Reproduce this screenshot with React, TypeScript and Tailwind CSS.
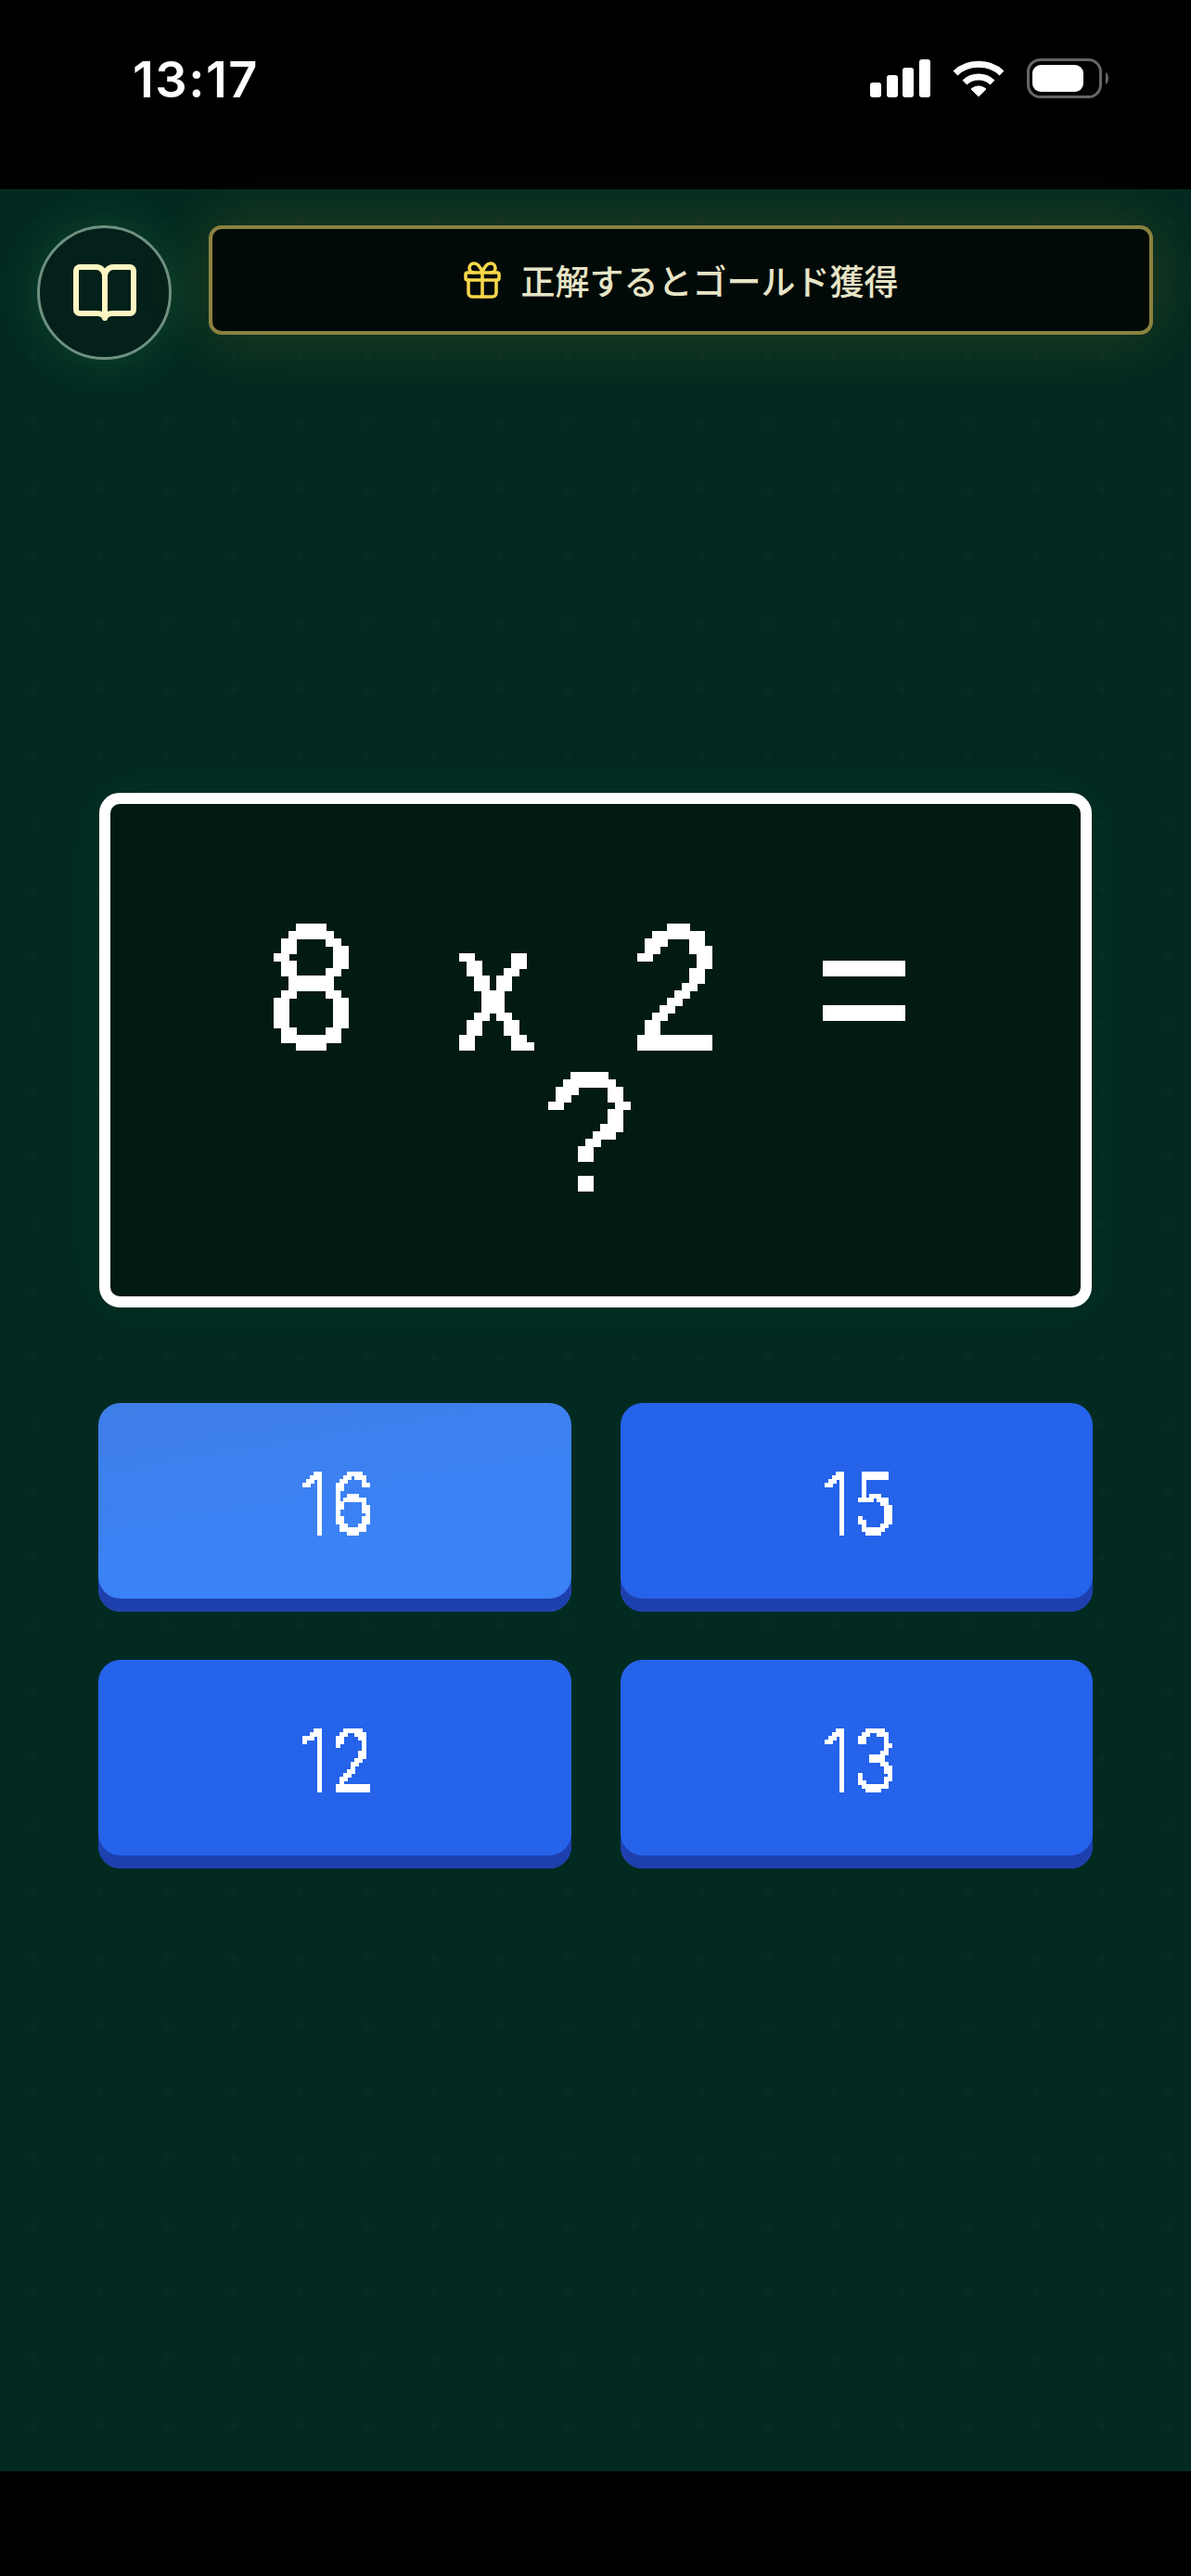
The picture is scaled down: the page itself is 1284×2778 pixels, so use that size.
function PixelFilters() {
  return (
    <svg width="0" height="0" className="absolute">
      <defs>
        <filter id="px8" x="0" y="0" width="100%" height="100%" colorInterpolationFilters="sRGB">
          <feFlood x="4" y="4" width="1" height="1" />
          <feComposite width="8" height="8" />
          <feTile result="grid" />
          <feComposite in="SourceGraphic" in2="grid" operator="in" />
          <feMorphology operator="dilate" radius="4" />
          <feComponentTransfer>
            <feFuncA type="discrete" tableValues="0 1 1 1" />
          </feComponentTransfer>
        </filter>
        <filter id="px4" x="0" y="0" width="100%" height="100%" colorInterpolationFilters="sRGB">
          <feFlood x="2" y="2" width="1" height="1" />
          <feComposite width="4" height="4" />
          <feTile result="grid" />
          <feComposite in="SourceGraphic" in2="grid" operator="in" />
          <feMorphology operator="dilate" radius="2" />
          <feComponentTransfer>
            <feFuncA type="discrete" tableValues="0 1 1 1" />
          </feComponentTransfer>
        </filter>
      </defs>
    </svg>
  );
}

function StatusIcons() {
  return (
    <div className="flex items-center gap-[24px]">
      <svg width="65" height="41" viewBox="0 0 65 41" fill="#fff">
        <rect x="0" y="25" width="12" height="16" rx="3" />
        <rect x="18" y="17" width="12" height="24" rx="3" />
        <rect x="35" y="9" width="12" height="32" rx="3" />
        <rect x="53" y="0" width="12" height="41" rx="3" />
      </svg>
      <svg width="56" height="40" viewBox="0 0 56 40" fill="none" stroke="#fff" strokeWidth="7">
        <path d="M3 14 C16 1 40 1 53 14" />
        <path d="M13 24 C21 16 35 16 43 24" />
        <path d="M20 31 L28 39 L36 31 C31 27 25 27 20 31 Z" fill="#fff" strokeWidth="1" />
      </svg>
      <svg width="90" height="43" viewBox="0 0 90 43" fill="none">
        <rect x="1.5" y="1.5" width="78" height="40" rx="13" stroke="#666" strokeWidth="3" />
        <rect x="6" y="7" width="55" height="29" rx="9" fill="#fff" />
        <path d="M85 15 C89 17 89 26 85 28 Z" fill="#666" />
      </svg>
    </div>
  );
}

function BookIcon() {
  return (
    <svg width="68" height="62" viewBox="0 0 68 62" fill="none" stroke="#fdf6c3" strokeWidth="6" strokeLinejoin="round" strokeLinecap="round">
      <path d="M34 58 V12 C33 7 30 3 25 3 H7 A4 4 0 0 0 3 7 V49 A4 4 0 0 0 7 53 H26 C30 53 33 55 34 58 C35 55 38 53 42 53 H61 A4 4 0 0 0 65 49 V7 A4 4 0 0 0 61 3 H43 C38 3 35 7 34 12" />
    </svg>
  );
}

function GiftIcon() {
  return (
    <svg width="40" height="40" viewBox="0 0 40 40" fill="none" stroke="#f5d74a" strokeWidth="3.6" strokeLinejoin="round" strokeLinecap="round">
      <rect x="2" y="12" width="36" height="8" rx="2" />
      <path d="M5 20 V34 A4 4 0 0 0 9 38 H31 A4 4 0 0 0 35 34 V20" />
      <path d="M20 12 V38" />
      <path d="M20 12 C18 6 15 2 11 2 A5 5 0 0 0 11 12" />
      <path d="M20 12 C22 6 25 2 29 2 A5 5 0 0 1 29 12" />
    </svg>
  );
}

function Answer({ value, active }: { value: string; active?: boolean }) {
  return (
    <button
      className={
        active
          ? "h-[225px] rounded-[24px] bg-[linear-gradient(170deg,#3f7ee8,#3b82f6_60%)] shadow-[inset_0_-14px_0_#1e40af] pt-[4px] pb-[14px] flex items-center justify-center"
          : "h-[225px] rounded-[24px] bg-[#2563eb] shadow-[inset_0_-14px_0_#1e40af] pt-[4px] pb-[14px] flex items-center justify-center"
      }
    >
      <span className="block w-full pl-[8px] [filter:url(#px4)]">
        <span className="block text-center text-white font-['Inter',sans-serif] font-light text-[91px] leading-[100px] tracking-[3px] scale-x-[0.85]">
          {value}
        </span>
      </span>
    </button>
  );
}

export default function App() {
  return (
    <div className="flex flex-col w-[1284px] h-[2778px] bg-black overflow-hidden">
      <PixelFilters />
      <div className="h-[204px] shrink-0 bg-black flex items-start justify-between pt-[63px] pl-[143px] pr-[87px]">
        <span className="text-white font-['Inter',sans-serif] font-semibold text-[54px] leading-[46px] tracking-[1.5px]">
          13:17
        </span>
        <StatusIcons />
      </div>

      <main className="h-[2461px] shrink-0 flex flex-col bg-[#032a21] bg-[radial-gradient(circle,rgba(255,255,255,0.01)_3px,transparent_4px)] bg-[size:72px_72px]">
        <div className="flex items-start gap-[40px] pt-[39px] pl-[40px] pr-[41px]">
          <button className="w-[145px] h-[145px] shrink-0 rounded-full border-[3px] border-[#6f9080] bg-[#03201a] flex items-center justify-center shadow-[0_0_50px_rgba(74,222,128,0.16)]">
            <BookIcon />
          </button>
          <div className="flex-1 h-[118px] rounded-[14px] border-[4px] border-[#8b8240] bg-[#020a08] flex items-center justify-center gap-[22px] shadow-[0_0_70px_rgba(234,179,8,0.16)]">
            <GiftIcon />
            <span className="text-[#e6e4c6] font-['Noto_Sans_CJK_JP',sans-serif] font-medium text-[37px] leading-[40px]">
              正解するとゴールド獲得
            </span>
          </div>
        </div>

        <div className="mt-[467px] mx-[107px] h-[555px] rounded-[22px] border-[12px] border-white bg-[#021a14] flex flex-col items-center justify-center shadow-[0_0_60px_rgba(16,185,129,0.05)]">
          <div className="w-full pt-[22px] pr-[14px] [filter:url(#px8)]">
            <div className="text-center text-white font-['Liberation_Sans',sans-serif] text-[186px] leading-[158px] [word-spacing:68px] scale-x-[0.9]">
              8 x 2 =
              <br />?
            </div>
          </div>
        </div>

        <div className="mt-[103px] mx-[106px] grid grid-cols-2 gap-x-[53px] gap-y-[52px]">
          <Answer value="16" active />
          <Answer value="15" />
          <Answer value="12" />
          <Answer value="13" />
        </div>
      </main>
    </div>
  );
}
